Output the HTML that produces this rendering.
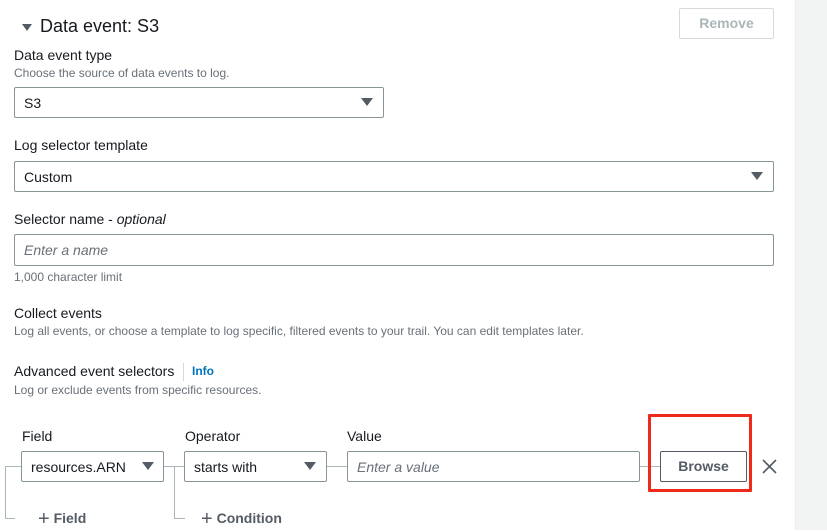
<!DOCTYPE html>
<html><head><style>
*{margin:0;padding:0;box-sizing:border-box}
body{width:827px;height:530px;overflow:hidden;background:#fff;font-family:"Liberation Sans",sans-serif;color:#16191f;position:relative}
.a{position:absolute;white-space:nowrap}
.l{font-size:14px}
.d{font-size:12px;color:#687078}
.box{position:absolute;border:1px solid #879596;border-radius:2px;background:#fff;font-size:14px;padding-left:9px;display:flex;align-items:center}
.tri{position:absolute;width:0;height:0;border-left:6px solid transparent;border-right:6px solid transparent;border-top:8px solid #545b64}
.ln{position:absolute;background:#aab7b8}
</style></head><body>
<div class="a" style="left:795px;top:0;width:32px;height:530px;background:#f2f3f3;border-left:1px solid #eaeded"></div>
<div class="tri" style="left:22px;top:24px;border-left-width:5px;border-right-width:5px;border-top-width:7px"></div>
<div class="a" style="left:40px;top:16px;font-size:18px">Data event: S3</div>
<div class="a" style="left:679px;top:8px;width:95px;height:31px;border:1px solid #d5dbdb;border-radius:2px;color:#aab7b8;font-weight:bold;font-size:14px;text-align:center;line-height:29px">Remove</div>

<div class="a l" style="left:14px;top:47px">Data event type</div>
<div class="a d" style="left:14px;top:66px">Choose the source of data events to log.</div>
<div class="box" style="left:14px;top:87px;width:370px;height:31px">S3</div>
<div class="tri" style="left:361px;top:98px"></div>

<div class="a l" style="left:14px;top:137px">Log selector template</div>
<div class="box" style="left:14px;top:161px;width:760px;height:31px">Custom</div>
<div class="tri" style="left:751px;top:172px"></div>

<div class="a l" style="left:14px;top:211px">Selector name - <i>optional</i></div>
<div class="box" style="left:14px;top:234px;width:760px;height:32px;color:#687078;font-style:italic">Enter a name</div>
<div class="a d" style="left:14px;top:270px">1,000 character limit</div>

<div class="a l" style="left:14px;top:305px">Collect events</div>
<div class="a d" style="left:14px;top:324px">Log all events, or choose a template to log specific, filtered events to your trail. You can edit templates later.</div>

<div class="a l" style="left:14px;top:363px">Advanced event selectors</div>
<div class="a" style="left:183px;top:363px;width:1px;height:18px;background:#d5dbdb"></div>
<div class="a" style="left:192px;top:364px;font-size:12px;font-weight:bold;color:#0073bb">Info</div>
<div class="a d" style="left:14px;top:383px">Log or exclude events from specific resources.</div>

<div class="a l" style="left:22px;top:428px">Field</div>
<div class="a l" style="left:185px;top:428px">Operator</div>
<div class="a l" style="left:347px;top:428px">Value</div>

<div class="ln" style="left:5px;top:466px;width:16px;height:1px"></div>
<div class="ln" style="left:5px;top:466px;width:1px;height:53px"></div>
<div class="ln" style="left:5px;top:518px;width:10px;height:1px"></div>
<div class="ln" style="left:163px;top:466px;width:21px;height:1px"></div>
<div class="ln" style="left:174px;top:466px;width:1px;height:53px"></div>
<div class="ln" style="left:174px;top:518px;width:11px;height:1px"></div>
<div class="ln" style="left:326px;top:466px;width:21px;height:1px"></div>
<div class="ln" style="left:639px;top:466px;width:21px;height:1px"></div>

<div class="box" style="left:21px;top:451px;width:143px;height:31px">resources.ARN</div>
<div class="tri" style="left:142px;top:462px"></div>
<div class="box" style="left:184px;top:451px;width:143px;height:31px">starts with</div>
<div class="tri" style="left:304px;top:462px"></div>
<div class="box" style="left:347px;top:451px;width:293px;height:31px;color:#687078;font-style:italic">Enter a value</div>
<div class="a" style="left:660px;top:451px;width:87px;height:31px;border:1px solid #545b64;border-radius:2px;font-weight:bold;font-size:14px;color:#545b64;text-align:center;line-height:29px">Browse</div>
<svg class="a" style="left:762px;top:459px" width="15" height="15"><path d="M1 1L14 14M14 1L1 14" stroke="#545b64" stroke-width="1.6"/></svg>

<div class="a" style="left:648px;top:414px;width:104px;height:78px;border:3px solid #f02a1a;border-radius:1px"></div>

<div class="a" style="left:38px;top:508px;font-size:14px;font-weight:bold;color:#545b64"><span style="font-weight:normal;font-size:20px;vertical-align:-2px">+</span> Field</div>
<div class="a" style="left:201px;top:508px;font-size:14px;font-weight:bold;color:#545b64"><span style="font-weight:normal;font-size:20px;vertical-align:-2px">+</span> Condition</div>
</body></html>
